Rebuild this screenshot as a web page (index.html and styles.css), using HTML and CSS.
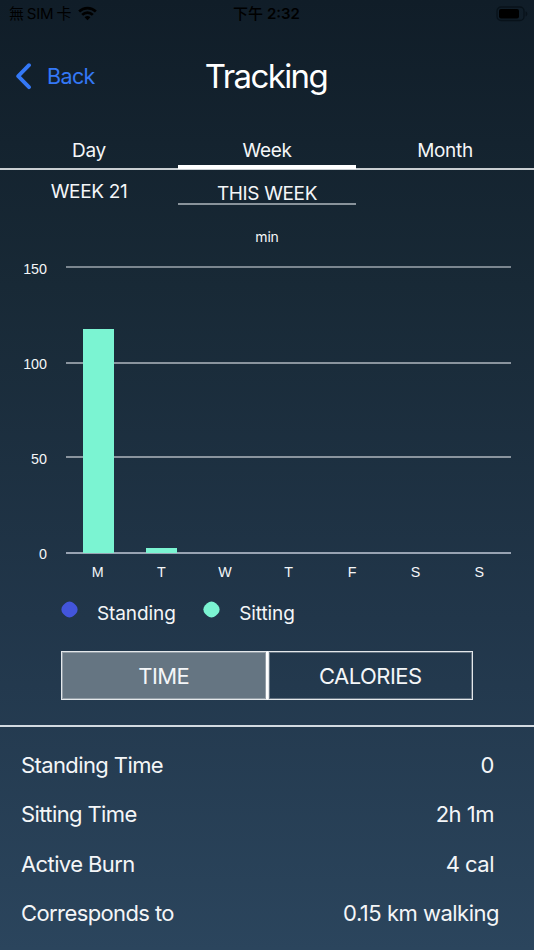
FILE: index.html
```
<!DOCTYPE html>
<html lang="en">

<head>
    <meta charset="UTF-8">
    <meta name="viewport" content="width=device-width, initial-scale=1.0">
    <title>Tracking</title>
    <link rel="stylesheet" href="styles.css">
</head>

<body>

    <div class="status-bar">
        <div class="carrier">
            <span class="carrier-name">無<span class="sim">SIM</span>卡</span>
            <svg class="wifi" width="19" height="15" viewBox="0 0 20 15" fill="none" stroke="#000" stroke-width="2.8">
                <path d="M1.2 5.4a12.6 12.6 0 0 1 17.6 0" />
                <path d="M4.4 8.9a8 8 0 0 1 11.2 0" />
                <path d="M10 14.6l-3.1-3.1a4.5 4.5 0 0 1 6.2 0z" fill="#000" stroke="none" />
            </svg>
        </div>
        <div class="clock"><span class="ampm">下午</span> 2:32</div>
        <div class="battery">
            <svg width="32" height="16" viewBox="0 0 32 16">
                <rect x="1" y="1" width="27" height="13.5" rx="4" fill="none" stroke="#08121a" stroke-width="1.3" />
                <rect x="3" y="3" width="20" height="9.5" rx="2" fill="#000" />
                <path d="M29.6 5.2c2.3 1 2.3 4.2 0 5.2z" fill="#08121a" />
            </svg>
        </div>
    </div>

    <header>
        <a class="back" href="#">
            <svg width="16" height="27" viewBox="0 0 16 27" fill="none" stroke="#3478f6" stroke-width="3.8" stroke-linecap="round" stroke-linejoin="round">
                <path d="M13 2.2L2.2 13.2l10.8 11" />
            </svg>
            <span>Back</span>
        </a>
        <h1>Tracking</h1>
    </header>

    <nav class="tabs">
        <a class="tab" href="#">Day</a>
        <a class="tab active" href="#">Week</a>
        <a class="tab" href="#">Month</a>
    </nav>

    <div class="weeks">
        <div class="week">WEEK 21</div>
        <div class="week current">THIS WEEK</div>
    </div>

    <div class="unit">min</div>

    <div class="chart">
        <div class="axis">
            <span>150</span>
            <span>100</span>
            <span>50</span>
            <span>0</span>
        </div>
        <div class="plot">
            <div class="bar-slot"><div class="bar" style="height: 78.1%"></div></div>
            <div class="bar-slot"><div class="bar" style="height: 1.6%"></div></div>
            <div class="bar-slot"></div>
            <div class="bar-slot"></div>
            <div class="bar-slot"></div>
            <div class="bar-slot"></div>
            <div class="bar-slot"></div>
        </div>
    </div>

    <div class="days">
        <span>M</span>
        <span>T</span>
        <span>W</span>
        <span>T</span>
        <span>F</span>
        <span>S</span>
        <span>S</span>
    </div>

    <div class="legend">
        <span class="dot standing"></span>
        <span class="legend-name">Standing</span>
        <span class="dot sitting"></span>
        <span class="legend-name">Sitting</span>
    </div>

    <div class="switch">
        <button class="selected">TIME</button>
        <button>CALORIES</button>
    </div>

    <section class="stats">
        <div class="stat"><span>Standing Time</span><span class="value">0</span></div>
        <div class="stat"><span>Sitting Time</span><span class="value">2h 1m</span></div>
        <div class="stat"><span>Active Burn</span><span class="value">4 cal</span></div>
        <div class="stat wide"><span>Corresponds to</span><span class="value">0.15 km walking</span></div>
    </section>

</body>

</html>
```
FILE: styles.css
```
* {
    box-sizing: border-box;
}

body {
    margin: 0;
    height: 950px;
    overflow: hidden;
    display: flex;
    flex-direction: column;
    font-family: Inter, "Noto Sans CJK TC", sans-serif;
    color: #f4f6f8;
    background: linear-gradient(#101d28 0%, #182936 30%, #21364a 65%, #2b455d 100%);
}

a {
    color: inherit;
    text-decoration: none;
}

/* Status bar */
.status-bar {
    display: grid;
    grid-template-columns: 1fr auto 1fr;
    align-items: center;
    height: 28px;
    padding: 0 6px 0 9px;
    color: #000;
    font-size: 15px;
    line-height: 20px;
}

.carrier {
    display: flex;
    align-items: center;
    gap: 7px;
}

.carrier-name {
    display: flex;
    align-items: center;
    gap: 3px;
    letter-spacing: -0.2px;
}

.wifi {
    margin-top: -2px;
}

.clock {
    padding-right: 4px;
    font-weight: 600;
}

.ampm {
    font-weight: 500;
}

.battery {
    display: flex;
    justify-content: flex-end;
    margin-top: -1px;
}

/* Title */
header {
    display: grid;
    grid-template-columns: 1fr auto 1fr;
    align-items: center;
    height: 96px;
    padding: 0 16px;
}

.back {
    display: flex;
    align-items: center;
    gap: 15px;
    color: #3478f6;
    font-size: 21.5px;
    letter-spacing: -0.6px;
}

h1 {
    margin: 0;
    padding-right: 2px;
    color: #fff;
    font-size: 33px;
    font-weight: 400;
    letter-spacing: -1.6px;
}

/* Day / Week / Month */
.tabs {
    display: grid;
    grid-template-columns: repeat(3, 1fr);
    height: 46px;
    border-bottom: 2px solid #c9ced2;
}

.tab {
    height: 45px;
    padding-top: 15px;
    text-align: center;
    font-size: 19px;
    line-height: 24px;
    letter-spacing: -0.3px;
}

.active {
    border-bottom: 4px solid #fff;
}

.weeks {
    display: grid;
    grid-template-columns: repeat(3, 1fr);
    height: 35px;
    font-size: 19px;
    line-height: 20px;
    letter-spacing: -0.35px;
    text-align: center;
}

.week {
    height: 35px;
    padding-top: 12px;
}

.current {
    padding-top: 14px;
    border-bottom: 2px solid #89939b;
}

/* Chart */
.unit {
    height: 61px;
    padding-top: 24px;
    text-align: center;
    font-size: 14px;
    line-height: 16px;
    letter-spacing: -0.2px;
}

.chart {
    display: flex;
    height: 288px;
    padding-right: 23px;
}

.axis {
    display: flex;
    flex-direction: column;
    justify-content: space-between;
    width: 66px;
    margin: -5px 0 -8px;
    padding-right: 19px;
    text-align: right;
    font-family: "Liberation Sans", Arial, sans-serif;
    font-size: 14.3px;
    line-height: 16px;
}

.plot {
    flex: 1;
    display: grid;
    grid-template-columns: repeat(7, 1fr);
    padding-bottom: 1px;
    background:
        linear-gradient(#7b868f, #7b868f) 0 0 / 100% 2px no-repeat,
        linear-gradient(#8a949e, #8a949e) 0 33.57% / 100% 2px no-repeat,
        linear-gradient(#8a949e, #8a949e) 0 66.6% / 100% 2px no-repeat,
        linear-gradient(#98a3b2, #98a3b2) 0 100% / 100% 2px no-repeat;
}

.bar-slot {
    display: flex;
    align-items: flex-end;
    justify-content: center;
    padding-left: 1px;
}

.bar {
    width: 31px;
    background-color: #7bf4d2;
}

.days {
    display: grid;
    grid-template-columns: repeat(7, 1fr);
    height: 42px;
    padding: 10px 23px 0 66px;
    text-align: center;
    font-family: "Liberation Sans", Arial, sans-serif;
    font-size: 14.3px;
    line-height: 16px;
}

.legend {
    display: flex;
    height: 55px;
    padding: 6px 0 0 61.5px;
    font-size: 19px;
    line-height: 24px;
    letter-spacing: -0.1px;
}

.dot {
    width: 15px;
    height: 15px;
    margin: 0 20.5px 0 0;
    border-radius: 6px;
    transform: rotate(45deg);
}

.standing {
    background-color: #4355db;
}

.sitting {
    background-color: #7bf4d2;
}

.legend-name {
    margin-right: 28px;
}

/* Time / Calories switch */
.switch {
    display: flex;
    width: 412px;
    height: 49px;
    margin-left: 61px;
}

button {
    flex: 1;
    padding: 0;
    border: 1px solid #e3e7ea;
    box-shadow: inset 0 0 0 1px rgba(255, 255, 255, 0.3);
    background: none;
    color: inherit;
    font-family: inherit;
    font-size: 22px;
    letter-spacing: -0.55px;
}

.selected {
    background-color: #657582;
    border-right: 2px solid #fff;
}

/* Totals */
.stats {
    display: flex;
    flex-direction: column;
    margin-top: 25px;
    padding-top: 13px;
    border-top: 2px solid #d3dae1;
    font-size: 22px;
    letter-spacing: -0.6px;
}

.stat {
    display: flex;
    align-items: center;
    justify-content: space-between;
    height: 49.5px;
    padding: 0 40px 0 21px;
}

.wide {
    padding-right: 35px;
}

.value {
    letter-spacing: -0.5px;
}
```
